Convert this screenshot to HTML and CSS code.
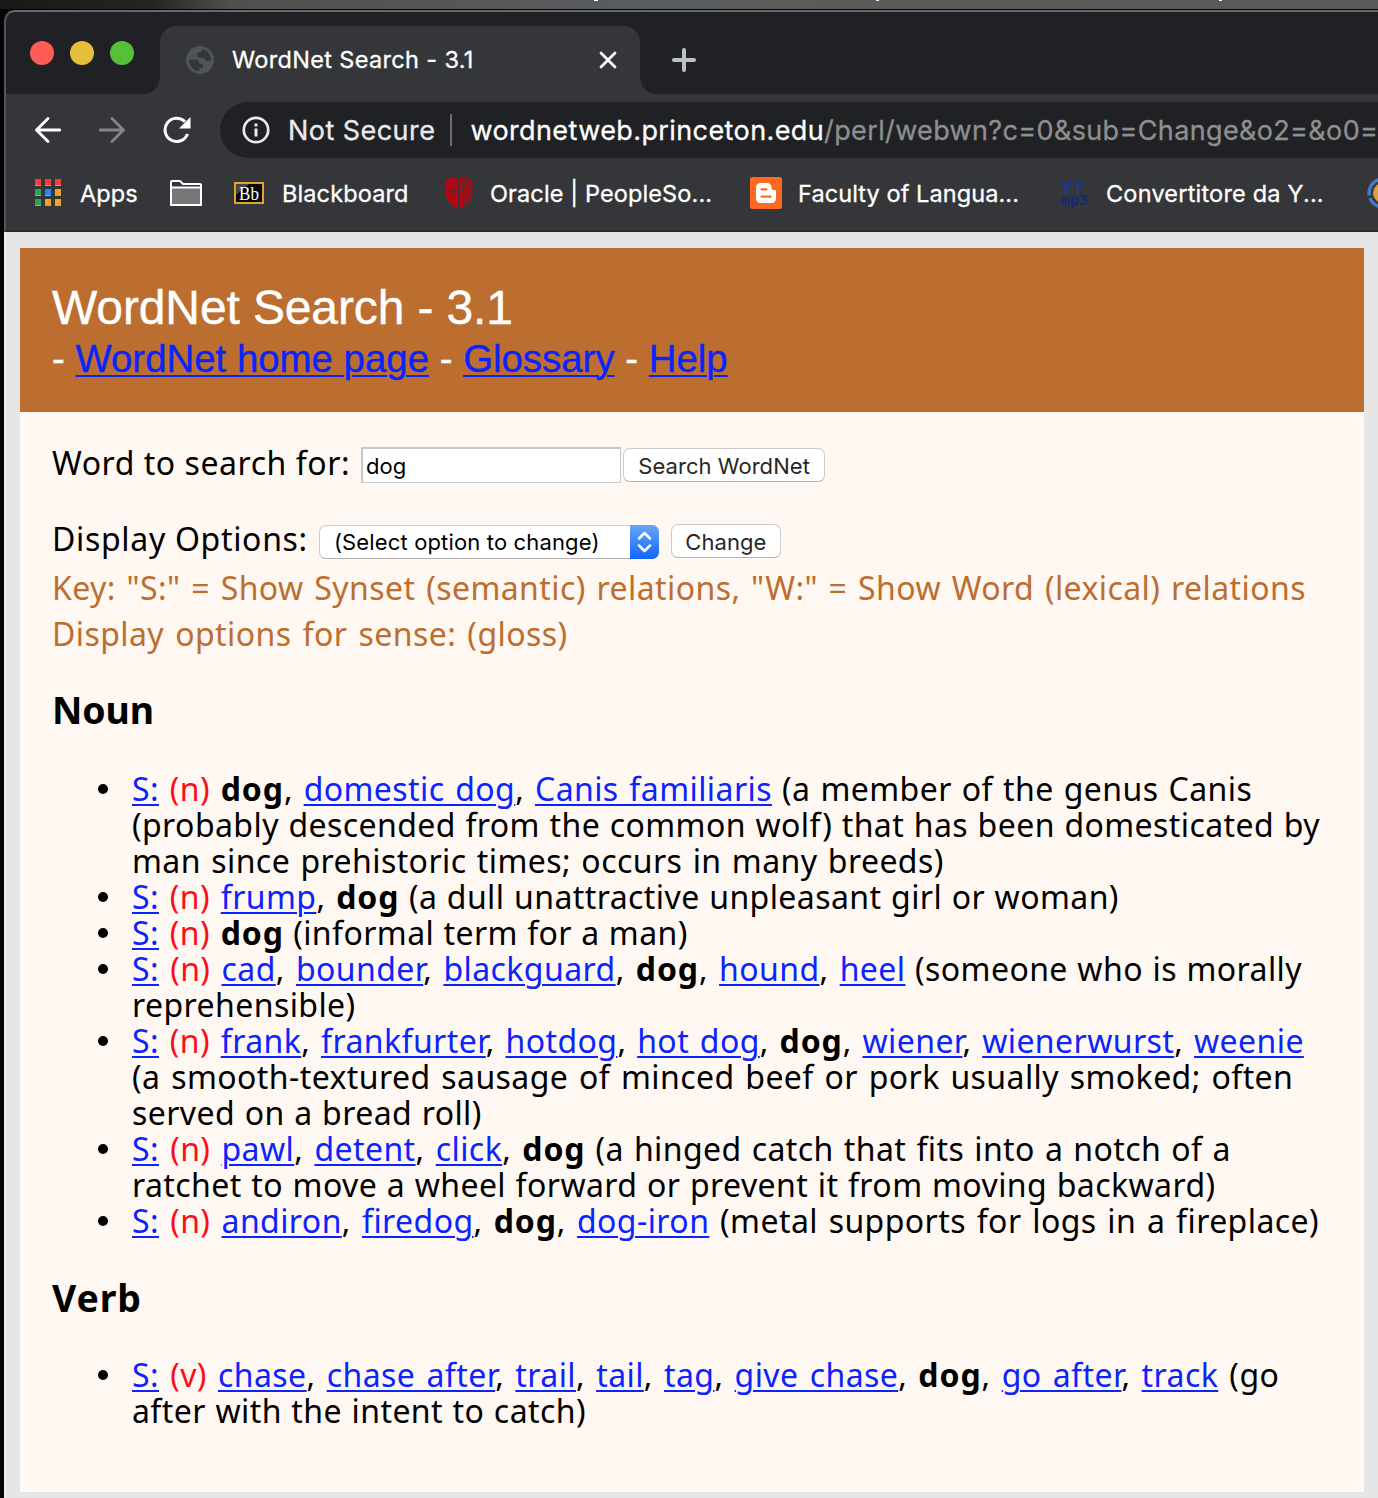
FILE: index.html
```html
<!DOCTYPE html>
<html lang="en">
<head>
<meta charset="utf-8">
<title>WordNet Search - 3.1</title>
<link rel="stylesheet" href="styles.css">
</head>
<body>
<div class="desktop">
<div class="window">
  <div class="tabstrip">
    <div class="lights"><i class="red"></i><i class="yellow"></i><i class="green"></i></div>
    <div class="tab">
      <svg class="globe" width="28" height="28" viewBox="0 0 28 28"><circle cx="14" cy="14" r="14" fill="#50545a"/><path d="M3 13.500h6.500q4 .2 4 4.500h3.500v4h-3.500v3q-3 .3-5-1Q3 20.500 3 13.500zM17 3.300q7.500 2.500 8 10.200l-1.500 1.500h-4l-2-3h-3.500l-3-1.500V6.500H15V4z" fill="#35363a"/></svg>
      <span class="tab-title">WordNet Search - 3.1</span>
      <svg class="close" width="18" height="18" viewBox="0 0 18 18"><path d="M2 2l14 14M16 2L2 16" stroke="#fff" stroke-width="2.800" stroke-linecap="round"/></svg>
    </div>
    <svg class="plus" width="24" height="24" viewBox="0 0 24 24"><path d="M12 2v20M2 12h20" stroke="#bdc1c6" stroke-width="4" stroke-linecap="round"/></svg>
  </div>
  <div class="toolbar">
    <svg class="nav" width="26" height="26" viewBox="0 0 26 26"><path d="M25 13H2M13 1.500L1.500 13 13 24.500" stroke="#fff" stroke-width="2.800" fill="none" stroke-linecap="round"/></svg>
    <svg class="nav" width="26" height="26" viewBox="0 0 26 26"><path d="M1 13h23M13 1.500L24.500 13 13 24.500" stroke="#848587" stroke-width="2.800" fill="none" stroke-linecap="round"/></svg>
    <svg class="nav" width="28" height="28" viewBox="0 0 28 28"><path d="M24.500 18A11.600 11.600 0 1 1 22 5.800" stroke="#fff" stroke-width="3" fill="none"/><path d="M27.500 1v11.500H16z" fill="#fff"/></svg>
    <div class="omnibox">
      <svg width="28" height="28" viewBox="0 0 28 28"><circle cx="14" cy="14" r="12.200" stroke="#e8eaed" stroke-width="2.700" fill="none"/><path d="M14 12.500v8M14 7.500v3" stroke="#e8eaed" stroke-width="3"/></svg>
      <span class="secure">Not Secure</span>
      <i class="bar"></i>
      <span class="url"><b>wordnetweb.princeton.edu</b>/perl/webwn?c=0&amp;sub=Change&amp;o2=&amp;o0=</span>
    </div>
  </div>
  <div class="bookmarks">
    <div class="bm apps"><svg width="26" height="28" viewBox="0 0 26 28"><path d="M0 6h6v1H0zM10 6h6v1h-6zM20 6h6v1h-6zM0 16h6v1H0zM10 16h6v1h-6zM20 16h6v1h-6zM0 26h6v1H0zM10 26h6v1h-6zM20 26h6v1h-6z" fill="#a3a5a8"/><path d="M0 0h6v6H0zM10 0h6v6h-6zM20 0h6v6h-6z" fill="#f83a38"/><path d="M0 10h6v6H0zM0 20h6v6H0z" fill="#369e5b"/><path d="M10 10h6v6h-6z" fill="#2089f5"/><path d="M20 10h6v6h-6zM10 20h6v6h-6zM20 20h6v6h-6z" fill="#f2a328"/></svg>
    <span>Apps</span></div>
    <div class="bm folder"><svg width="32" height="26" viewBox="0 0 32 26"><path d="M1 24V2q0-1 1-1h8l3 3h17q1 0 1 1v19q0 1-1 1H2q-1 0-1-1z" fill="#35363a" stroke="#fff" stroke-width="2"/><path d="M1 7.500h30V25H1z" fill="#757678" stroke="#fff" stroke-width="2"/></svg></div>
    <div class="bm board"><svg width="30" height="22" viewBox="0 0 30 22"><rect x="1" y="1" width="28" height="20" fill="#070707" stroke="#dda52c" stroke-width="2"/><path d="M2 2h13L2 13z" fill="#454545"/><text x="5" y="18" class="bbt" textLength="20" lengthAdjust="spacingAndGlyphs">Bb</text></svg>
    <span>Blackboard</span></div>
    <div class="bm oracle"><svg width="28" height="32" viewBox="0 0 28 32"><path d="M.5 3Q7 1 13 0v32Q.5 26 .5 14z" fill="#b40713"/><path d="M14.500 0Q21 .5 27.500 3v11q0 13-13 18z" fill="#b40713"/><path d="M16 0l4 30M18 0l6 26M20 0l7 21M23 1l5 14" stroke="#35363a" stroke-width="1"/><path d="M7.500 11.500l1 2h2l-1.500 1.500.5 2-2-1-2 1 .5-2L4.500 13.500h2z" fill="#35363a"/></svg>
    <span>Oracle | PeopleSo...</span></div>
    <div class="bm faculty"><svg width="32" height="32" viewBox="0 0 32 32"><rect width="32" height="32" rx="2.500" fill="#ff6a22"/><path d="M11 6h6q4.500 0 4.500 5 0 2 2 2h1.200q1.300 0 1.300 1.300V21q0 5-5 5H11q-5 0-5-5V11q0-5 5-5z" fill="#fff"/><path d="M11.500 12.300h5M11.500 19.700h9" stroke="#ff6a22" stroke-width="2.200" stroke-linecap="round"/></svg>
    <span>Faculty of Langua...</span></div>
    <div class="bm conv"><svg width="28" height="30" viewBox="0 0 28 30"><text x="0" y="16" textLength="24" lengthAdjust="spacingAndGlyphs" class="y1">YT</text><text x="0" y="27" textLength="27" lengthAdjust="spacingAndGlyphs" class="y2">mp3</text></svg>
    <span>Convertitore da Y...</span></div>
    <div class="bm last"><svg width="32" height="32" viewBox="0 0 32 32"><circle cx="16" cy="16" r="14" fill="none" stroke="#4478c4" stroke-width="3.500" stroke-dasharray="20 2.500" stroke-dashoffset="4"/><circle cx="16" cy="16" r="10" fill="#d8a040"/></svg></div>
  </div>
  <div class="page">
    <div class="header">
      <h1>WordNet Search - 3.1</h1>
      <p>- <a>WordNet home page</a> - <a>Glossary</a> - <a>Help</a></p>
    </div>
    <div class="content">
      <div class="row"><label>Word to search for:</label><input class="word" value="dog"><button class="btn go">Search WordNet</button></div>
      <div class="row options"><label>Display Options:</label><div class="select"><span>(Select option to change)</span><svg width="29" height="34" viewBox="0 0 29 34"><path d="M9 13.500l5.500-5.500 5.500 5.500M9 20.500l5.500 5.500 5.500-5.500" fill="none" stroke="#fff" stroke-width="2.500" stroke-linecap="round" stroke-linejoin="round"/></svg></div><button class="btn change">Change</button></div>
      <p class="key"><span class="w4">Key: "S:" = Show Synset (semantic) relations, "W:" = Show Word (lexical) relations</span><br><span class="w5">Display options for sense: (gloss)</span></p>
      <h3>Noun</h3>
      <ul>
        <li><span class="w4"><a>S:</a> <em>(n)</em> <b>dog</b>, <a>domestic dog</a>, <a>Canis familiaris</a></span><span class="w2"> (a member of the genus Canis</span><br><span class="w1">(probably descended from the common wolf) that has been domesticated by</span><br><span class="w3">man since prehistoric times; occurs in many breeds)</span></li>
        <li><span class="w4"><a>S:</a> <em>(n)</em> <a>frump</a>, <b>dog</b></span><span class="w1"> (a dull unattractive unpleasant girl or woman)</span></li>
        <li><span class="w4"><a>S:</a> <em>(n)</em> <b>dog</b></span><span class="w0"> (informal term for a man)</span></li>
        <li><span class="w5"><a>S:</a> <em>(n)</em> <a>cad</a>, <a>bounder</a>, <a>blackguard</a>, <b>dog</b>, <a>hound</a>, <a>heel</a></span><span class="w1"> (someone who is morally</span><br><span>reprehensible)</span></li>
        <li><span class="w4"><a>S:</a> <em>(n)</em> <a>frank</a>, <a>frankfurter</a>, <a>hotdog</a>, <a>hot dog</a>, <b>dog</b>, <a>wiener</a>, <a>wienerwurst</a>, <a>weenie</a></span><br><span class="w4">(a smooth-textured sausage of minced beef or pork usually smoked; often</span><br><span class="w1">served on a bread roll)</span></li>
        <li><span class="w5"><a>S:</a> <em>(n)</em> <a>pawl</a>, <a>detent</a>, <a>click</a>, <b>dog</b></span><span class="w2"> (a hinged catch that fits into a notch of a</span><br><span class="w1">ratchet to move a wheel forward or prevent it from moving backward)</span></li>
        <li><span class="w5"><a>S:</a> <em>(n)</em> <a>andiron</a>, <a>firedog</a>, <b>dog</b>, <a>dog-iron</a></span><span class="w4"> (metal supports for logs in a fireplace)</span></li>
      </ul>
      <h3 class="verb">Verb</h3>
      <ul>
        <li><span class="w5"><a>S:</a> <em>(v)</em> <a>chase</a>, <a>chase after</a>, <a>trail</a>, <a>tail</a>, <a>tag</a>, <a>give chase</a>, <b>dog</b>, <a>go after</a>, <a>track</a> (go</span><br><span class="w1">after with the intent to catch)</span></li>
      </ul>
    </div>
  </div>
</div>
</div>
</body>
</html>
```
FILE: styles.css
```css
* { box-sizing: border-box; }
body { margin: 0; background: #050403; overflow: hidden; }
.desktop {
  width: 1378px; height: 1498px; padding: 10px 0 0 4px;
  background:
    linear-gradient(#fff, #fff) 594px 0 / 4px 1px no-repeat,
    linear-gradient(#fff, #fff) 876px 0 / 3px 1px no-repeat,
    linear-gradient(#fff, #fff) 1219px 0 / 3px 1px no-repeat,
    linear-gradient(90deg, #191817, #252423 150px, #504f4e 230px, #585858 500px, #585d60 640px, #5c5b59 800px, #595959) 0 0 / 100% 9px no-repeat,
    #050403;
}
.window {
  height: 1488px; display: flex; flex-direction: column; overflow: hidden;
  border-top: 2px solid #68696c; border-top-left-radius: 11px;
  background: #202124; font-family: Inter, sans-serif; color: #fff; white-space: nowrap;
}
.tabstrip, .toolbar, .bookmarks { border-left: 2px solid #55565a; }
.tabstrip { height: 82px; flex: none; display: flex; align-items: flex-start; border-top-left-radius: 10px; }
.lights { width: 154px; padding: 29px 0 0 24px; display: flex; gap: 16px; }
.lights i { width: 24px; height: 24px; border-radius: 50%; }
.red { background: #ff5b57; }
.yellow { background: #e5bf3c; }
.green { background: #58c038; }
.tab {
  position: relative; width: 480px; height: 68px; margin-top: 14px; padding: 0 23px 0 26px;
  display: flex; align-items: center; background: #35363a; border-radius: 16px 16px 0 0;
}
.tab::before, .tab::after { content: ""; position: absolute; bottom: 0; width: 16px; height: 16px; }
.tab::before { left: -16px; background: radial-gradient(circle at 0 0, transparent 15.500px, #35363a 16px); }
.tab::after { right: -16px; background: radial-gradient(circle at 100% 0, transparent 15.500px, #35363a 16px); }
.tab-title { margin: -2px 0 0 18px; font-size: 23.500px; letter-spacing: .34px; -webkit-text-stroke: .3px; }
.close { margin-left: auto; }
.plus { margin: 36px 0 0 32px; }
.toolbar { height: 72px; flex: none; display: flex; align-items: center; padding-left: 29px; background: #35363a; }
.nav { flex: none; margin-right: 38px; }
.nav:nth-child(3) { margin-right: 29px; }
.omnibox {
  flex: 1; height: 56px; border-radius: 28px 0 0 28px; background: #202124;
  display: flex; align-items: center; padding-left: 22px; overflow: hidden;
  font-size: 27px; letter-spacing: .45px; -webkit-text-stroke: .3px;
}
.omnibox svg { flex: none; }
.secure { margin-left: 18px; color: #e8eaed; }
.bar { flex: none; width: 2px; height: 32px; background: #6d6e71; margin: 0 18px 0 15px; }
.url { color: #8e8f91; letter-spacing: .36px; }
.url b { font-weight: 400; color: #fff; letter-spacing: .4px; }
.bookmarks {
  height: 66px; flex: none; display: flex; align-items: center; padding-bottom: 10px;
  background: #35363a; border-bottom: 2px solid #2a2829; font-size: 23.500px; letter-spacing: .08px; -webkit-text-stroke: .3px;
}
.bm { flex: none; display: flex; align-items: center; }
.bm span { flex: 1; text-align: left; }
.apps { width: 135px; padding-left: 29px; gap: 19px; }
.folder { width: 64px; padding-left: 29px; }
.board { width: 210px; padding-left: 29px; gap: 18px; letter-spacing: .12px; }
.oracle { width: 306px; padding-left: 30px; gap: 17px; letter-spacing: .12px; }
.faculty { width: 310px; padding-left: 29px; gap: 16px; }
.conv { width: 308px; padding-left: 30px; gap: 17px; letter-spacing: .2px; }
.last { padding-left: 28px; }
.bbt { font: 19px "Liberation Serif", serif; fill: #fff; }
.y1 { font: bold 16px "DejaVu Sans Mono", monospace; fill: #1d3594; stroke: none; }
.y2 { font: bold 14px "DejaVu Sans Mono", monospace; fill: #14287c; }
.page { flex: 1; background: #e6e6e6; padding: 16px 14px 6px 14px; border-left: 2px solid #ebebeb; display: flex; flex-direction: column; }
.header { height: 164px; background: #bc6e30; padding: 33px 32px; font-family: "Liberation Sans", Arial, sans-serif; -webkit-text-stroke: .4px; }
.header h1 { margin: 0; font-size: 48px; font-weight: 400; line-height: 54px; letter-spacing: -.12px; }
.header p { margin: -1px 0 0; font-size: 38.400px; line-height: 49px; }
a { color: #0b24fb; text-decoration: underline; text-decoration-thickness: 2px; text-underline-offset: 3px; }
.content { flex: 1; background: #fff7f1; color: #000; padding: 33px 32px 0; font: 32px/36px "Noto Sans", sans-serif; letter-spacing: .42px; }
.row { display: flex; align-items: center; height: 40px; }
.row label { margin-top: -4px; letter-spacing: .54px; }
.row.options { margin-top: 36px; }
.options label { letter-spacing: .68px; }
.word { width: 260px; height: 36px; margin-left: 11px; border: 2px solid #c8c8c8; border-width: 2px 1px 1px 2px; padding: 1px 3px 0; background: #fff; font: 22px Inter, sans-serif; }
.btn { height: 34px; padding: 2px 0 0; text-align: center; border: 1px solid #cfcac7; border-bottom-color: #b5b0ad; border-radius: 7px; background: #fff; color: #272727; font: 22px Inter, sans-serif; letter-spacing: .05px; }
.go { margin-left: 2px; width: 202px; }
.change { margin-left: 12px; width: 110px; }
.select {
  width: 340px; height: 34px; margin: 2px 0 0 11px; border-radius: 7px; border: 1px solid #cfcac7; border-bottom-color: #b5b0ad; background: #fff;
  display: flex; align-items: center; justify-content: space-between; padding-left: 14px; font: 22px Inter, sans-serif; letter-spacing: .15px;
}
.select svg { background: linear-gradient(#6aa5f8, #1066fe); border-radius: 0 7px 7px 0; margin-right: -1px; }
.key { margin: 4px 0 0; line-height: 46px; color: #bc6e30; }
h3 { margin: 30px 0 38px; font-size: 37.400px; line-height: 46px; letter-spacing: -.1px; }
h3.verb { margin: 36px 0; letter-spacing: .9px; }
ul { margin: 0; padding-left: 80px; list-style: none; }
li::before { content: ""; display: inline-block; width: 10px; height: 10px; margin: 0 24px 0 -34px; border-radius: 50%; background: #000; vertical-align: 7px; }
li b { letter-spacing: .9px; }
em { font-style: normal; color: #fb0d1b; }
.w0 { word-spacing: .5px; }
.w1 { word-spacing: .8px; }
.w2 { word-spacing: 1.300px; }
.w3 { word-spacing: 1.600px; }
.w4 { word-spacing: 2px; }
.w5 { word-spacing: 2.400px; }
```
